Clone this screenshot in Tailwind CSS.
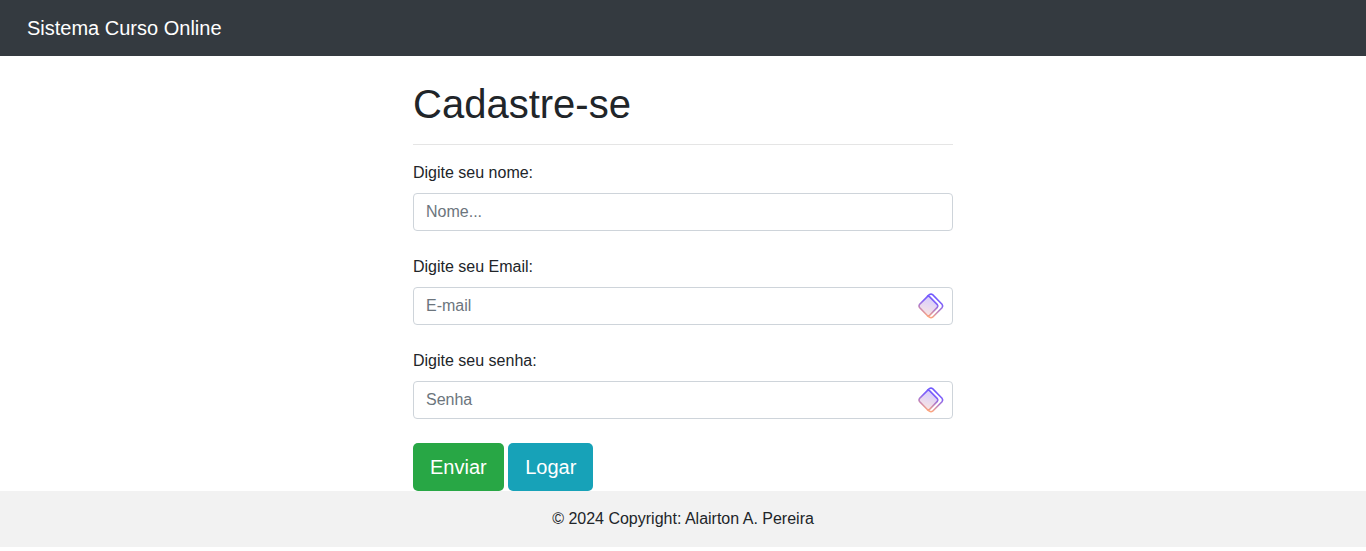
<!DOCTYPE html>
<html lang="pt-BR">
<head>
<meta charset="utf-8">
<meta name="viewport" content="width=device-width, initial-scale=1">
<title>Sistema Curso Online</title>
<script src="https://cdn.jsdelivr.net/npm/@tailwindcss/browser@4"></script>
</head>
<body class="bg-white font-['Liberation_Sans',Arial,sans-serif] text-base text-[#212529]">
<svg class="absolute size-0" aria-hidden="true">
  <defs>
    <linearGradient id="stroke" gradientUnits="userSpaceOnUse" x1="18" y1="4" x2="12" y2="26">
      <stop offset="0" stop-color="#7059ff"/><stop offset=".35" stop-color="#8060f8"/><stop offset="1" stop-color="#ffa67c"/>
    </linearGradient>
    <linearGradient id="fill" gradientUnits="userSpaceOnUse" x1="16" y1="5" x2="10" y2="25">
      <stop offset="0" stop-color="#d3caff"/><stop offset="1" stop-color="#fbe6e2"/>
    </linearGradient>
    <symbol id="diamond" viewBox="0 0 30 30">
      <path d="M11.200 5.400 13.400 3.700q1.600-1.200 3.200 0L26 13.200q1.400 1.800 0 3.600L16.600 26.200q-1.600 1.200-3.200 0L11.200 24.500" fill="none" stroke="url(#stroke)" stroke-width="1.600"/>
      <path d="M11.300 5.600q1.100-.9 2.200 0L21.300 13.600q1.100 1.400 0 2.800L13.500 24.500q-1.100.9-2.200 0L3.500 16.500q-1.100-1.500 0-3Z" fill="url(#fill)" stroke="url(#stroke)" stroke-width="1.600"/>
    </symbol>
  </defs>
</svg>
<header class="bg-[#343a40] px-[27px] py-3">
  <nav class="flex h-8 items-center"><a href="#" class="text-xl text-white">Sistema Curso Online</a></nav>
</header>
<main class="mx-auto max-w-[540px] pt-6">
  <h1 class="text-[40px] leading-12">Cadastre-se</h1>
  <hr class="my-4 border-black/10">
  <form>
    <div class="mb-6">
      <label for="nome" class="mb-2 block">Digite seu nome:</label>
      <input id="nome" type="text" placeholder="Nome..." class="block h-[38px] w-full rounded-sm border border-[#ced4da] bg-white px-3 placeholder:text-[#6c757d]">
    </div>
    <div class="mb-6">
      <label for="email" class="mb-2 block">Digite seu Email:</label>
      <div class="relative">
        <input id="email" type="email" placeholder="E-mail" class="block h-[38px] w-full rounded-sm border border-[#ced4da] bg-white pr-10 pl-3 placeholder:text-[#6c757d]">
        <svg class="absolute top-1 right-[7px] size-[30px]" aria-hidden="true"><use href="#diamond"/></svg>
      </div>
    </div>
    <div class="mb-6">
      <label for="senha" class="mb-2 block">Digite seu senha:</label>
      <div class="relative">
        <input id="senha" type="password" placeholder="Senha" class="block h-[38px] w-full rounded-sm border border-[#ced4da] bg-white pr-10 pl-3 placeholder:text-[#6c757d]">
        <svg class="absolute top-1 right-[7px] size-[30px]" aria-hidden="true"><use href="#diamond"/></svg>
      </div>
    </div>
    <div>
      <button type="submit" class="inline-block rounded-[5px] bg-[#28a745] px-[17px] py-2.5 align-middle text-xl text-white">Enviar</button>
      <a href="#" class="inline-block rounded-[5px] bg-[#17a2b8] px-[17px] py-2.5 align-middle text-xl text-white">Logar</a>
    </div>
  </form>
</main>
<footer class="bg-black/5 p-4 text-center">© 2024 Copyright: Alairton A. Pereira</footer>
</body>
</html>
